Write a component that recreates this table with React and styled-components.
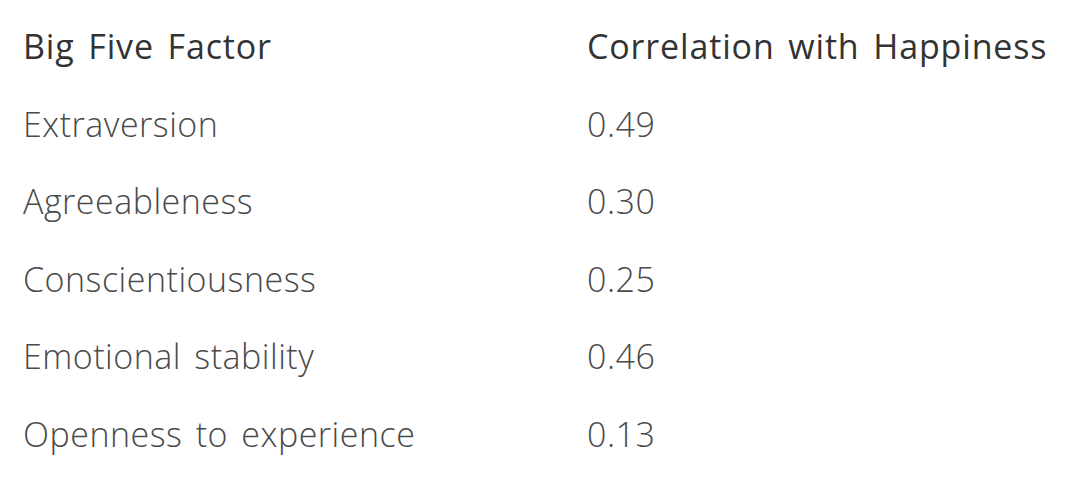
import React from "react";
import styled, { createGlobalStyle } from "styled-components";

const Global = createGlobalStyle`
  html, body { margin: 0; padding: 0; background: #ffffff; }
  body { font-family: "Open Sans", "Liberation Sans", sans-serif; }
`;

const Table = styled.div`
  display: grid;
  grid-template-columns: 564px 1fr;
  padding: 23px 0 0 23px;
`;

const Cell = styled.div`
  height: 77.5px;
  display: flex;
  align-items: flex-start;
  font-size: 34px;
  line-height: 46px;
  letter-spacing: ${(p) => (p.$head ? "0.85px" : "0.5px")};
  word-spacing: 4px;
  white-space: nowrap;
  color: ${(p) => (p.$head ? "#333333" : "#4a4a4a")};
  font-weight: ${(p) => (p.$head ? 400 : 300)};
`;

const rows = [
  ["Extraversion", "0.49"],
  ["Agreeableness", "0.30"],
  ["Conscientiousness", "0.25"],
  ["Emotional stability", "0.46"],
  ["Openness to experience", "0.13"],
];

export default function App() {
  return (
    <>
      <Global />
      <Table>
        <Cell $head>Big Five Factor</Cell>
        <Cell $head>Correlation with Happiness</Cell>
        {rows.map(([a, b]) => (
          <React.Fragment key={a}>
            <Cell>{a}</Cell>
            <Cell>{b}</Cell>
          </React.Fragment>
        ))}
      </Table>
    </>
  );
}
